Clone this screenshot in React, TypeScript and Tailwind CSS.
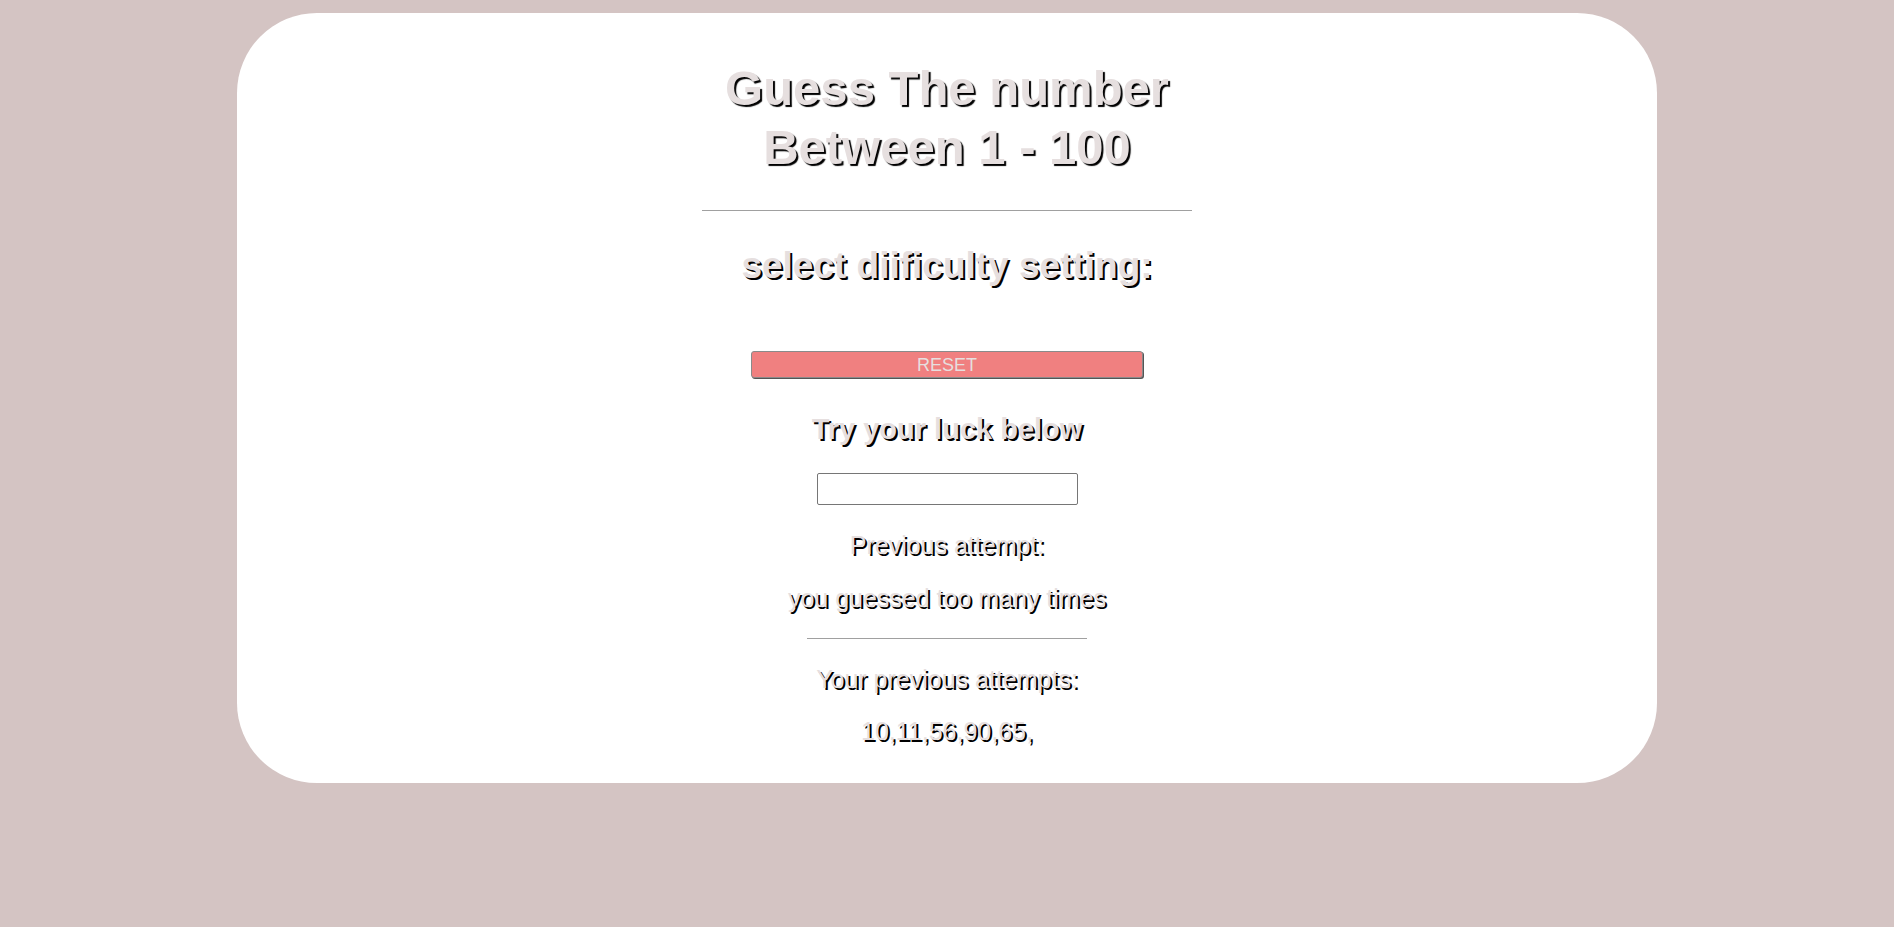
import { useState } from 'react';

const headShadow = '[text-shadow:2px_2px_0_#000]';

export default function App() {
  const [guess, setGuess] = useState('');
  const attempts = [10, 11, 56, 90, 65];

  return (
    <div className="min-h-[927px] bg-[#d4c4c3] pt-[13px] font-['Liberation_Sans',Arial,sans-serif]">
      <div className="mx-auto flex w-[75%] flex-col items-center rounded-[80px] bg-white pt-[46px] pb-[38px] text-center text-[#e6dfdf]">
        <h1 className="text-[49px] font-bold leading-[59px] [text-shadow:2px_2px_1px_#000]">
          Guess The number
          <br />
          Between 1 - 100
        </h1>

        <hr className="mt-[33px] w-[490px] border-t border-[#a0a0a0]" />

        <h2 className={`mt-[35px] text-[37px] font-bold leading-[40px] ${headShadow}`}>
          select diificulty setting:
        </h2>

        <button
          className="mt-[65px] h-[27px] w-[392px] rounded-[3px] border border-[#8a8a8a] bg-[#f08080] text-[18px] leading-none text-[#e6dfdf] shadow-[1px_1px_0_#555]"
          onClick={() => setGuess('')}
        >
          RESET
        </button>

        <h3 className={`mt-[34px] text-[29px] font-bold leading-[34px] ${headShadow}`}>
          Try your luck below
        </h3>

        <input
          type="text"
          value={guess}
          onChange={(e) => setGuess(e.target.value)}
          className="mt-[27px] h-[32px] w-[261px] rounded-[2px] border border-[#767676] bg-white px-2 text-black outline-none"
        />

        <p className="mt-[26px] text-[25px] leading-[28px] [text-shadow:2px_2px_0_#000]">Previous attempt:</p>
        <p className="mt-[25px] text-[25px] leading-[28px] [text-shadow:2px_2px_0_#000]">you guessed too many times</p>

        <hr className="mt-[26px] w-[280px] border-t border-[#a0a0a0]" />

        <p className="mt-[26px] text-[25px] leading-[28px] [text-shadow:2px_2px_0_#000]">Your previous attempts:</p>
        <p className="mt-[24px] text-[25px] leading-[28px] [text-shadow:2px_2px_0_#000]">
          {attempts.map((a) => `${a},`).join('')}
        </p>
      </div>
    </div>
  );
}
